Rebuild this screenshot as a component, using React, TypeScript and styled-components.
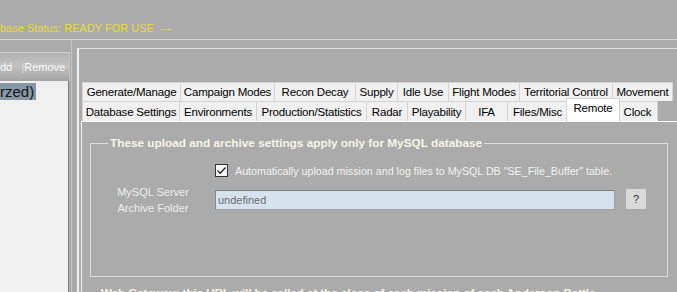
import React from 'react';
import styled, { createGlobalStyle } from 'styled-components';

const GlobalStyle = createGlobalStyle`
  html, body {
    margin: 0;
    padding: 0;
  }
  body {
    background: #ababab;
    font-family: "Liberation Sans", Arial, sans-serif;
    overflow: hidden;
  }
`;

const Screen = styled.div`
  width: 677px;
  height: 292px;
  overflow: hidden;
  display: flex;
  flex-direction: column;
`;

const StatusBar = styled.div`
  height: 40px;
  flex-shrink: 0;
  box-sizing: border-box;
  border-bottom: 1px solid #d6d6d6;
  padding-top: 21px;
  color: #e9d940;
  font-size: 11px;
  line-height: 14px;
  white-space: pre;
`;

const Main = styled.div`
  flex: 1;
  display: flex;
  min-height: 0;
`;

const LeftPanel = styled.div`
  width: 70px;
  margin-top: 12px;
  display: flex;
  flex-direction: column;
`;

const ListHeader = styled.div`
  height: 29px;
  box-sizing: border-box;
  border-top: 1px solid #cfcfcf;
  border-right: 1px solid #c6c6c6;
  background: linear-gradient(#b4b4b4, #c2c2c2 45%, #a4a4a4);
  color: #fafafa;
  font-size: 11px;
  line-height: 28px;
  white-space: pre;
  overflow: hidden;
  span {
    color: #dcdcdc;
  }
`;

const List = styled.div`
  flex: 1;
  width: 68px;
  background: #f0f0f0;
  border-right: 1px solid #7c7c7c;
  padding-top: 2px;
  overflow: hidden;
`;

const ListItem = styled.div<{ $selected?: boolean }>`
  display: inline-block;
  background: ${(p) => (p.$selected ? '#8597a9' : 'transparent')};
  color: #151515;
  font-size: 15px;
  line-height: 17px;
  padding-right: 2px;
  white-space: nowrap;
`;

const Splitter = styled.div`
  width: 7px;
  background: linear-gradient(90deg, #ababab 1px, #c4c4c4 1px, #c4c4c4 2px, #ababab 2px);
`;

const RightPanel = styled.div`
  flex: 1;
  margin-top: 8px;
  border-top: 1px solid #e2e2e2;
  border-left: 2px solid #f2f2f2;
  padding: 33px 0 0 2px;
  display: flex;
  flex-direction: column;
  min-width: 0;
`;

const TabStrip = styled.div`
  display: flex;
  flex-direction: column;
  margin-left: 1px;
`;

const TabRow = styled.div<{ $height: number }>`
  display: flex;
  height: ${(p) => p.$height}px;
  align-items: stretch;
`;

const Tab = styled.div<{ $w: number; $active?: boolean }>`
  width: ${(p) => p.$w}px;
  flex-shrink: 0;
  box-sizing: border-box;
  background: ${(p) => (p.$active ? '#ffffff' : '#f0f0f0')};
  border: 1px solid #d4d4d4;
  border-left: none;
  border-bottom: none;
  color: #000;
  font-size: 11.5px;
  letter-spacing: -0.2px;
  text-align: center;
  white-space: nowrap;
  display: flex;
  align-items: center;
  justify-content: center;
  &:first-child {
    border-left: 1px solid #d4d4d4;
  }
  ${(p) =>
    p.$active &&
    `
    margin: -3px -2px -1px;
    border-left: 1px solid #d4d4d4;
    position: relative;
    z-index: 1;
    align-items: flex-start;
    padding-top: 3px;
  `}
`;

const Page = styled.div`
  flex: 1;
  border-top: 1px solid #ffffff;
  border-left: 1px solid #f4f4f4;
  padding: 14px 9px 0 8px;
`;

const Group = styled.fieldset`
  margin: 0;
  padding: 0;
  height: 141px;
  box-sizing: border-box;
  border: 1px solid #dcdcdc;
`;

const GroupTitle = styled.legend`
  margin-left: 17px;
  padding: 0 2px;
  color: #f6f6e8;
  font-size: 11.8px;
  font-weight: bold;
  line-height: 14px;
`;

const FormGrid = styled.div`
  display: grid;
  grid-template-columns: 124px 400px 20px;
  row-gap: 7px;
  margin-top: 14px;
  align-items: center;
`;

const CheckRow = styled.label`
  grid-column: 2 / 4;
  display: flex;
  align-items: center;
  color: #f2f2f2;
  font-size: 10.7px;
  white-space: nowrap;
`;

const CheckBox = styled.span`
  width: 13px;
  height: 13px;
  box-sizing: border-box;
  border: 1px solid #333;
  background: #f4f4f4;
  margin-right: 7px;
  display: flex;
  align-items: center;
  justify-content: center;
`;

const FieldLabel = styled.div`
  color: #ededed;
  font-size: 11px;
  line-height: 16px;
  text-align: center;
`;

const TextBox = styled.div`
  height: 20px;
  box-sizing: border-box;
  border: 1px solid #a2a2a2;
  border-top-color: #7e7e7e;
  border-left-color: #888;
  background: #d6e3ef;
  color: #6c6c6c;
  font-size: 11px;
  line-height: 18px;
  padding-left: 2px;
`;

const HelpButton = styled.div`
  width: 20px;
  height: 20px;
  margin-left: 11px;
  margin-top: -3px;
  background: #dadada;
  color: #333;
  font-size: 11px;
  display: flex;
  align-items: center;
  justify-content: center;
`;

const Note = styled.div`
  margin-top: 10px;
  padding-left: 11px;
  color: #f6f6e8;
  font-size: 11.5px;
  font-weight: bold;
  white-space: nowrap;
`;

const rowOne = [
  { label: 'Generate/Manage', w: 99 },
  { label: 'Campaign Modes', w: 94 },
  { label: 'Recon Decay', w: 81 },
  { label: 'Supply', w: 42 },
  { label: 'Idle Use', w: 51 },
  { label: 'Flight Modes', w: 71 },
  { label: 'Territorial Control', w: 93 },
  { label: 'Movement', w: 60 },
];

const rowTwo = [
  { label: 'Database Settings', w: 98 },
  { label: 'Environments', w: 77 },
  { label: 'Production/Statistics', w: 110 },
  { label: 'Radar', w: 41 },
  { label: 'Playability', w: 58 },
  { label: 'IFA', w: 42 },
  { label: 'Files/Misc', w: 60 },
  { label: 'Remote', w: 54, active: true },
  { label: 'Clock', w: 40 },
];

const App = () => {
  return (
    <>
      <GlobalStyle />
      <Screen>
        <StatusBar>base Status: READY FOR USE  ---</StatusBar>
        <Main>
          <LeftPanel>
            <ListHeader>
              dd   <span>|</span>Remove
            </ListHeader>
            <List>
              <ListItem $selected>rzed)</ListItem>
            </List>
          </LeftPanel>
          <Splitter />
          <RightPanel>
            <TabStrip>
              <TabRow $height={19}>
                {rowOne.map((t) => (
                  <Tab key={t.label} $w={t.w}>
                    {t.label}
                  </Tab>
                ))}
              </TabRow>
              <TabRow $height={20}>
                {rowTwo.map((t) => (
                  <Tab key={t.label} $w={t.w} $active={t.active}>
                    {t.label}
                  </Tab>
                ))}
              </TabRow>
            </TabStrip>
            <Page>
              <Group>
                <GroupTitle>These upload and archive settings apply only for MySQL database</GroupTitle>
                <FormGrid>
                  <CheckRow>
                    <CheckBox>
                      <svg width="11" height="11" viewBox="0 0 11 11">
                        <path d="M1.5 5.5 L4.2 8.2 L9.5 2.5" fill="none" stroke="#222" strokeWidth="1.3" />
                      </svg>
                    </CheckBox>
                    Automatically upload mission and log files to MySQL DB "SE_File_Buffer" table.
                  </CheckRow>
                  <FieldLabel>
                    MySQL Server
                    <br />
                    Archive Folder
                  </FieldLabel>
                  <TextBox>undefined</TextBox>
                  <HelpButton>?</HelpButton>
                </FormGrid>
              </Group>
              <Note>Web Gateway: this URL will be called at the close of each mission of each Anderson Battle</Note>
            </Page>
          </RightPanel>
        </Main>
      </Screen>
    </>
  );
};

export default App;
